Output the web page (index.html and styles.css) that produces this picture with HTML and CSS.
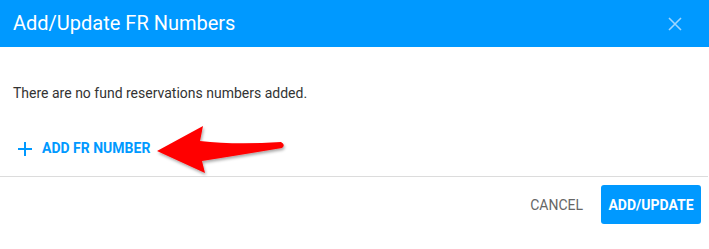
FILE: index.html
```html
<!DOCTYPE html>
<html lang="en">
<head>
    <meta charset="UTF-8">
    <meta name="viewport" content="width=device-width, initial-scale=1.0">
    <title>Add/Update FR Numbers</title>
    <link rel="stylesheet" href="styles.css">
</head>
<body>
    <div class="dialog">
        <div class="dialog-header">
            <h2 class="dialog-title">Add/Update FR Numbers</h2>
            <button class="close-btn" aria-label="Close">
                <svg width="14" height="14" viewBox="0 0 14 14">
                    <path d="M1 1 L13 13 M13 1 L1 13" stroke="currentColor" stroke-width="1.6" fill="none"/>
                </svg>
            </button>
        </div>
        <div class="dialog-content">
            <p class="empty-text">There are no fund reservations numbers added.</p>
            <div class="add-row">
                <button class="add-btn">
                    <svg width="14" height="14" viewBox="0 0 14 14">
                        <path d="M7 0 V14 M0 7 H14" stroke="currentColor" stroke-width="2" fill="none"/>
                    </svg>
                    <span>ADD FR NUMBER</span>
                </button>
                <!-- annotation arrow -->
                <svg class="callout-arrow" width="140" height="56" viewBox="0 0 140 56">
                    <defs>
                        <filter id="shadow" x="-10%" y="-10%" width="130%" height="140%">
                            <feDropShadow dx="1" dy="2" stdDeviation="1.5" flood-color="#000" flood-opacity="0.35"/>
                        </filter>
                    </defs>
                    <path d="M2 29 L48 4 L45 19 Q80 23 126 20 Q131 23 127 26 Q85 33 47 39 L50 51 Z" fill="#ff0000" filter="url(#shadow)"/>
                </svg>
            </div>
        </div>
        <div class="dialog-actions">
            <button class="btn btn-text">CANCEL</button>
            <button class="btn btn-primary">ADD/UPDATE</button>
        </div>
    </div>
</body>
</html>
```

FILE: styles.css
```css
body {
    margin: 0;
    padding: 0;
    font-family: Roboto, "Liberation Sans", Arial, sans-serif;
    background-color: #fff;
}

.dialog {
    width: 709px;
    height: 249px;
    background-color: #fff;
}

.dialog-header {
    height: 47px;
    background-color: #0099ff;
    display: flex;
    align-items: center;
    justify-content: space-between;
    padding: 0 13px;
}

.dialog-title {
    margin: 0;
    font-size: 20px;
    font-weight: 400;
    color: #fff;
    margin-top: -1px;
}

.close-btn {
    background: none;
    border: none;
    padding: 0;
    margin-right: 14px;
    color: #9fd6ff;
    display: flex;
    cursor: pointer;
}

.dialog-content {
    padding: 36px 13px 10px;
    border-bottom: 1px solid #dcdcdc;
    margin-right: 1px;
}

.empty-text {
    margin: 0;
    font-size: 14px;
    line-height: 20px;
    color: #333;
}

.add-row {
    position: relative;
    margin-top: 27px;
    height: 36px;
    display: flex;
    align-items: center;
}

.add-btn {
    background: none;
    border: none;
    padding: 0 0 0 5px;
    display: flex;
    align-items: center;
    gap: 10px;
    color: #0099ff;
    font-family: inherit;
    font-size: 14px;
    font-weight: 700;
    cursor: pointer;
}

.add-btn svg {
    margin-top: 1px;
}

.callout-arrow {
    position: absolute;
    left: 142px;
    top: -8px;
}

.dialog-actions {
    display: flex;
    justify-content: flex-end;
    align-items: center;
    gap: 18px;
    padding: 8px 8px 0;
}

.btn {
    font-family: inherit;
    font-size: 14px;
    border: none;
    background: none;
    cursor: pointer;
    height: 39px;
}

.btn-text {
    color: #666;
    padding: 0;
}

.btn-primary {
    width: 100px;
    background-color: #0099ff;
    color: #fff;
    font-weight: 700;
    border-radius: 3px;
    padding: 0;
}
```
